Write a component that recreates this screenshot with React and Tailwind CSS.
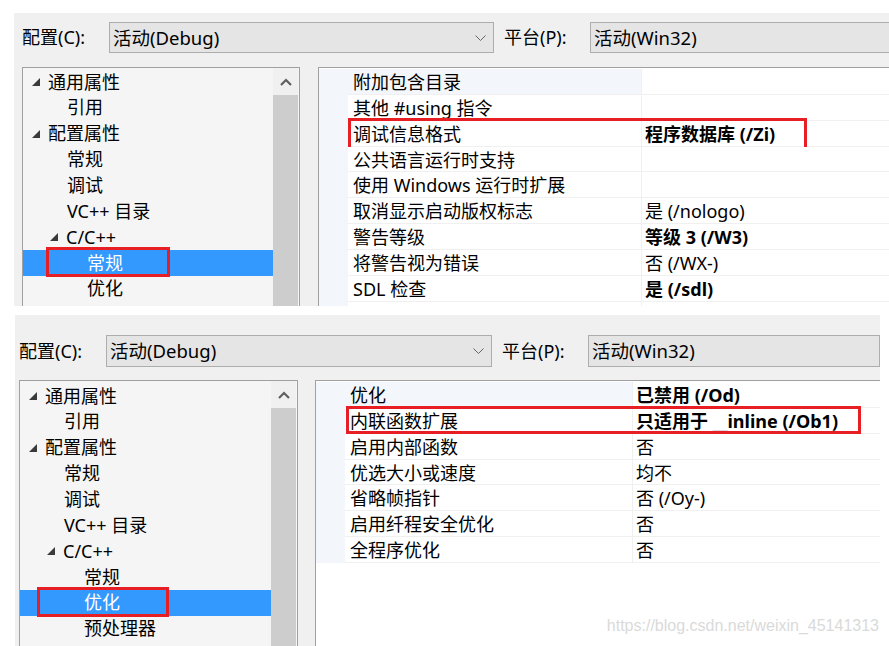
const TREE_TOP = [
  { t: '通用属性', k: 'g0' },
  { t: '引用', k: 'l1' },
  { t: '配置属性', k: 'g0' },
  { t: '常规', k: 'l1' },
  { t: '调试', k: 'l1' },
  { t: 'VC++ 目录', k: 'l1' },
  { t: 'C/C++', k: 'g1' },
  { t: '常规', k: 'l2', sel: true },
  { t: '优化', k: 'l2' },
];

const TREE_BOTTOM = [
  { t: '通用属性', k: 'g0' },
  { t: '引用', k: 'l1' },
  { t: '配置属性', k: 'g0' },
  { t: '常规', k: 'l1' },
  { t: '调试', k: 'l1' },
  { t: 'VC++ 目录', k: 'l1' },
  { t: 'C/C++', k: 'g1' },
  { t: '常规', k: 'l2' },
  { t: '优化', k: 'l2', sel: true },
  { t: '预处理器', k: 'l2' },
];

const PROPS_TOP = [
  { n: '附加包含目录', v: '' },
  { n: '其他 #using 指令', v: '' },
  { n: '调试信息格式', v: '程序数据库 (/Zi)', b: true, mark: true },
  { n: '公共语言运行时支持', v: '' },
  { n: '使用 Windows 运行时扩展', v: '' },
  { n: '取消显示启动版权标志', v: '是 (/nologo)' },
  { n: '警告等级', v: '等级 3 (/W3)', b: true },
  { n: '将警告视为错误', v: '否 (/WX-)' },
  { n: 'SDL 检查', v: '是 (/sdl)', b: true },
  { n: '', v: '' },
];

const PROPS_BOTTOM = [
  { n: '优化', v: '已禁用 (/Od)', b: true },
  { n: '内联函数扩展', v: 'inline', b: true, mark: true },
  { n: '启用内部函数', v: '否' },
  { n: '优选大小或速度', v: '均不' },
  { n: '省略帧指针', v: '否 (/Oy-)' },
  { n: '启用纤程安全优化', v: '否' },
  { n: '全程序优化', v: '否' },
];

function Tri() {
  return (
    <svg width="8" height="8" viewBox="0 0 8 8" className="mr-[8px] shrink-0">
      <polygon points="8,0 8,8 0,8" fill="#3a3a3a" />
    </svg>
  );
}

function TreeItem({ item, markCls }) {
  const pad =
    item.k === 'g0' ? 'pl-[9px]' : item.k === 'g1' ? 'pl-[27px]' : item.k === 'l1' ? 'pl-[44px]' : 'pl-[64px]';
  return (
    <div
      className={`relative flex items-center h-[25.86px] leading-[25.86px] whitespace-nowrap ${pad} ${
        item.sel ? 'bg-[#3399ff] text-white' : 'text-black'
      }`}
    >
      {(item.k === 'g0' || item.k === 'g1') && <Tri />}
      <span className="pt-[1px]">{item.t}</span>
      {item.sel && <div className={`absolute border-[3px] border-[#e81e25] ${markCls}`} />}
    </div>
  );
}

function Tree({ items, wCls, listCls, padCls, markCls }) {
  return (
    <div className={`${wCls} shrink-0 h-full border border-b-0 border-[#a0a0a0] bg-[#f5f5f5] flex overflow-hidden`}>
      <div className={`${listCls} shrink-0 ${padCls}`}>
        {items.map((it, i) => (
          <TreeItem key={i} item={it} markCls={markCls} />
        ))}
      </div>
      <div className="w-[25px] shrink-0 flex flex-col">
        <div className="h-[27px] shrink-0 bg-[#f0f0f0] flex items-center justify-center">
          <svg width="12" height="8" viewBox="0 0 12 8">
            <path d="M1 7 L6 2 L11 7" fill="none" stroke="#606060" strokeWidth="2.2" />
          </svg>
        </div>
        <div className="flex-1 bg-[#cdcdcd]" />
      </div>
    </div>
  );
}

function InlineValue() {
  return (
    <span>
      只适用于 <span className="text-[#d8d8d8]">__</span>inline (/Ob1)
    </span>
  );
}

function PropRow({ p, first, nameW, markCls }) {
  return (
    <div className="relative flex h-[25.86px] leading-[26px] whitespace-nowrap">
      <div className="w-[29px] shrink-0 bg-[#f3f6fb]" />
      <div
        className={`${nameW} shrink-0 pl-[5px] border-b border-r border-[#f0f0f0] ${
          first ? 'bg-[#f3f6fb]' : 'bg-white'
        }`}
      >
        {p.n}
      </div>
      <div className={`flex-1 pl-[3px] bg-white border-b border-[#f0f0f0] ${p.b ? 'font-bold' : ''}`}>
        {p.v === 'inline' ? <InlineValue /> : p.v}
      </div>
      {p.mark && <div className={`absolute border-[3px] border-[#e81e25] ${markCls}`} />}
    </div>
  );
}

function Combo({ text, wCls, hCls, arrow }) {
  return (
    <div
      className={`${wCls} ${hCls} shrink-0 border border-[#adadad] bg-[#e5e5e5] flex items-center pl-[3px] pr-[7px] overflow-hidden whitespace-nowrap text-[18.5px]`}
    >
      <span className="flex-1">{text}</span>
      {arrow && (
        <svg width="11" height="6" viewBox="0 0 11 6">
          <path d="M0.5 0.5 L5.5 5.5 L10.5 0.5" fill="none" stroke="#666" strokeWidth="1" />
        </svg>
      )}
    </div>
  );
}

export default function App() {
  return (
    <div className="relative w-[889px] h-[646px] bg-white overflow-hidden flex flex-col text-[18px] text-black font-['Noto_Sans','Noto_Sans_CJK_SC',sans-serif]">
      {/* upper capture */}
      <div className="ml-[14px] mt-[13px] w-[875px] h-[293px] shrink-0 bg-[#f0f0f0] flex flex-col overflow-hidden">
        <div className="h-[54px] shrink-0 flex items-start pt-[9px] pl-[8px]">
          <div className="w-[87px] h-[31px] shrink-0 flex items-center">配置(C):</div>
          <Combo text="活动(Debug)" wCls="w-[385px]" hCls="h-[31px]" arrow />
          <div className="ml-[10px] w-[86px] h-[31px] shrink-0 flex items-center">平台(P):</div>
          <Combo text="活动(Win32)" wCls="w-[320px]" hCls="h-[31px]" />
        </div>
        <div className="flex-1 flex pl-[8px] gap-[18px] overflow-hidden">
          <Tree
            items={TREE_TOP}
            wCls="w-[278px]"
            listCls="w-[250px]"
            padCls="pt-[1px]"
            markCls="left-[23px] top-[-3px] w-[124px] h-[30px]"
          />
          <div className="flex-1 h-full border-l border-t border-[#a0a0a0] bg-white pt-[1px] overflow-hidden">
            {PROPS_TOP.map((p, i) => (
              <PropRow
                key={i}
                p={p}
                first={i === 0}
                nameW="w-[294px]"
                markCls="left-[29px] top-[-3px] w-[459px] h-[32px]"
              />
            ))}
          </div>
        </div>
      </div>

      {/* lower capture */}
      <div className="ml-[15px] mt-[9px] w-[865px] h-[331px] shrink-0 bg-[#f0f0f0] flex flex-col overflow-hidden">
        <div className="h-[65px] shrink-0 flex items-start pt-[20px] pl-[4px]">
          <div className="w-[87px] h-[32px] shrink-0 flex items-center">配置(C):</div>
          <Combo text="活动(Debug)" wCls="w-[386px]" hCls="h-[32px]" arrow />
          <div className="ml-[10px] w-[86px] h-[32px] shrink-0 flex items-center">平台(P):</div>
          <Combo text="活动(Win32)" wCls="flex-1" hCls="h-[32px]" />
        </div>
        <div className="flex-1 flex pl-[4px] gap-[17px] overflow-hidden">
          <Tree
            items={TREE_BOTTOM}
            wCls="w-[279px]"
            listCls="w-[251px]"
            padCls="pt-[2px]"
            markCls="left-[17px] top-[-3px] w-[132px] h-[30px]"
          />
          <div className="flex-1 h-full border-l border-t border-[#a0a0a0] bg-white pt-[1px] overflow-hidden">
            {PROPS_BOTTOM.map((p, i) => (
              <PropRow
                key={i}
                p={p}
                first={i === 0}
                nameW="w-[288px]"
                markCls="left-[30px] top-[-2px] w-[515px] h-[28px]"
              />
            ))}
          </div>
        </div>
      </div>

      <div className="absolute right-[10px] bottom-[8px] text-[16px] text-[#dadada] font-['Liberation_Sans',sans-serif]">
        https://blog.csdn.net/weixin_45141313
      </div>
    </div>
  );
}
